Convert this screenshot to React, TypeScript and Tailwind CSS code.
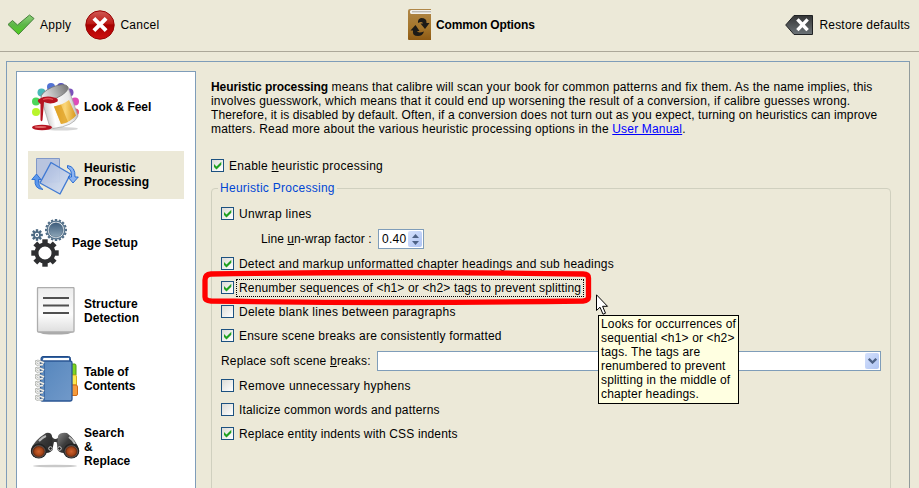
import type { ReactNode } from "react";

function ApplyIcon() {
  return (
    <svg width="28" height="22" viewBox="0 0 28 22" className="shrink-0">
      <defs>
        <linearGradient id="apply" x1="0" y1="0" x2="0" y2="1">
          <stop offset="0" stopColor="#8fd07c" />
          <stop offset="0.5" stopColor="#5db648" />
          <stop offset="1" stopColor="#4fd01c" />
        </linearGradient>
      </defs>
      <path d="M1 10.5 5.500 6.500 10.5 11 22.500 1 27 4.500 11.500 20.500Z" fill="url(#apply)" stroke="#46803a" strokeWidth="1" strokeLinejoin="round" />
    </svg>
  );
}

function CancelIcon() {
  return (
    <svg width="30" height="30" viewBox="0 0 30 30" className="shrink-0">
      <defs>
        <linearGradient id="cancel" x1="0" y1="0" x2="0" y2="1">
          <stop offset="0" stopColor="#cf5a55" />
          <stop offset="0.45" stopColor="#bd1a16" />
          <stop offset="0.5" stopColor="#a60000" />
          <stop offset="1" stopColor="#d01010" />
        </linearGradient>
      </defs>
      <circle cx="15" cy="15" r="14.2" fill="url(#cancel)" stroke="#980505" strokeWidth="1" />
      <path d="M10.300 9.800 19.700 19.200M19.700 9.800 10.300 19.200" stroke="#fff" strokeWidth="4" strokeLinecap="square" />
    </svg>
  );
}

function BookIcon() {
  return (
    <svg width="24" height="32" viewBox="0 0 24 32" className="shrink-0">
      <defs>
        <linearGradient id="cover" x1="0" y1="0" x2="0" y2="1">
          <stop offset="0" stopColor="#b08748" />
          <stop offset="0.6" stopColor="#a4752b" />
          <stop offset="1" stopColor="#8e5a14" />
        </linearGradient>
      </defs>
      <path d="M0 2Q0 0 2 0H23V31H1Q0 31 0 30Z" fill="url(#cover)" />
      <path d="M23 1H3Q1.500 1.500 2 3.500T4 5H23Z" fill="#f3f1ec" />
      <path d="M4 2.800H23" stroke="#a5a29b" strokeWidth="1" />
      <path d="M13 9Q19 9 18.500 14H21.500L17 20 12.500 14.500H15Q14 12 10 14Q9.500 10 13 9Z" fill="#1c1a17" />
      <path d="M10 27Q4 27 5 21.500H2.500L7.500 16 11.500 22H9Q10 24.500 16 22.500Q14.500 27 10 27Z" fill="#1c1a17" />
    </svg>
  );
}

function RestoreIcon() {
  return (
    <svg width="28" height="20" viewBox="0 0 28 20" className="shrink-0">
      <defs>
        <linearGradient id="restore" x1="0" y1="0" x2="0" y2="1">
          <stop offset="0" stopColor="#343536" />
          <stop offset="1" stopColor="#6c7377" />
        </linearGradient>
      </defs>
      <path d="M.7 10 9 .5H27.500V19.500H9Z" fill="url(#restore)" stroke="#202224" />
      <path d="M13.500 5.500 21.500 14M21.500 5.500 13.500 14" stroke="#fff" strokeWidth="3.300" strokeLinecap="square" />
    </svg>
  );
}

function PaintIcon() {
  return (
    <svg width="50" height="48" viewBox="0 0 50 48" className="shrink-0">
      <defs>
        <linearGradient id="can" x1="0" y1="0.2" x2="1" y2="0">
          <stop offset="0" stopColor="#c4c4c4" />
          <stop offset="0.25" stopColor="#ffffff" />
          <stop offset="0.7" stopColor="#e9e9e9" />
          <stop offset="1" stopColor="#999999" />
        </linearGradient>
        <linearGradient id="label" x1="0" x2="1">
          <stop offset="0" stopColor="#e2a62b" />
          <stop offset="0.5" stopColor="#fbd77a" />
          <stop offset="1" stopColor="#d9981a" />
        </linearGradient>
        <linearGradient id="rim" x1="0" x2="1">
          <stop offset="0" stopColor="#f2f2f2" />
          <stop offset="1" stopColor="#777" />
        </linearGradient>
      </defs>
      <circle cx="5" cy="29" r="4" fill="#b8f52c" />
      <circle cx="5" cy="18.500" r="4" fill="#4bd75a" />
      <circle cx="10.500" cy="9.500" r="4" fill="#49b8b8" />
      <circle cx="20" cy="4" r="4" fill="#5272d4" />
      <circle cx="30" cy="4" r="4" fill="#5550bd" />
      <circle cx="38.500" cy="9.500" r="4" fill="#7b51bb" />
      <circle cx="44" cy="18.500" r="4" fill="#df4cb9" />
      <circle cx="44.500" cy="29" r="3.500" fill="#e65b77" />
      <ellipse cx="30" cy="45.800" rx="17" ry="1.800" fill="#bbb" opacity=".6" />
      <path d="M10 15 37 4 47 33Q43 43 22 45.500Q19 44 18 41Z" fill="url(#can)" stroke="#a0a0a0" strokeWidth=".7" />
      <path d="M23 23.500Q32 21.500 38 17L45 32.500Q40 39 30 41Z" fill="url(#label)" />
      <path d="M23 23.500Q27 23 30 21.700L37 39Q34 40.500 30 41Z" fill="#dd9d1f" opacity=".7" />
      <ellipse cx="23.500" cy="9.500" rx="14.500" ry="5.800" transform="rotate(-23 23.500 9.500)" fill="url(#rim)" stroke="#777" strokeWidth=".8" />
      <path d="M8 16Q15 12 23 14.500Q28 15 26.500 18.500Q20 22 13 19L11.500 37Q10.500 39.500 9.500 37L9.500 21Q5 18 8 16Z" fill="#b51320" />
      <path d="M12 16.500Q17 14.500 22 16.500" fill="none" stroke="#e34b52" strokeWidth="1.300" />
      <ellipse cx="11" cy="44.500" rx="10" ry="2.700" fill="#b51320" />
      <ellipse cx="9.500" cy="44" rx="6" ry="1" fill="#e16a6a" />
    </svg>
  );
}

function RotateIcon() {
  return (
    <svg width="48" height="44" viewBox="0 0 48 44" className="shrink-0">
      <defs>
        <linearGradient id="sheet" x1="0" y1="0" x2="1" y2="1">
          <stop offset="0" stopColor="#a3b5dc" />
          <stop offset="1" stopColor="#dbe4f3" />
        </linearGradient>
      </defs>
      <path d="M5.500 5.500H28.500V29H5.500Z" fill="#b8c4df" stroke="#8098c8" />
      <path d="M20 9.500 39.500 21 29 41 9 30Z" fill="url(#sheet)" stroke="#3a76d3" strokeWidth="1.400" strokeLinejoin="round" opacity=".95" />
      <path d="M12 36.500Q3 36 4 26.500H.8L5.500 21 10 26.500H7.500Q7 33 12 36.500Z" fill="#5b97ec" stroke="#1b63cf" strokeWidth=".8" />
      <path d="M36.500 12.500Q44.500 13.500 44 24H47.300L42 30 37 24H40.500Q41 16.500 36.500 15Z" fill="#8db4f1" stroke="#1b63cf" strokeWidth=".9" />
    </svg>
  );
}

const TEETH_8 = [0, 45, 90, 135, 180, 225, 270, 315];
const TEETH_16 = [0, 22.5, 45, 67.5, 90, 112.5, 135, 157.5, 180, 202.5, 225, 247.5, 270, 292.5, 315, 337.5];

function GearsIcon() {
  return (
    <svg width="36" height="48" viewBox="0 0 36 48" className="shrink-0">
      <defs>
        <linearGradient id="steel" x1="0" y1="0" x2="0" y2="1">
          <stop offset="0" stopColor="#3e5d7c" />
          <stop offset="1" stopColor="#8da6b8" />
        </linearGradient>
      </defs>
      <g fill="#536f88">
        {TEETH_16.map((a) => (
          <rect key={a} x="23.800" y="0" width="2.400" height="3" transform={`rotate(${a} 25 11)`} />
        ))}
      </g>
      <circle cx="25" cy="11" r="8.800" fill="#fff" stroke="#58758e" strokeWidth="1.200" />
      <circle cx="25" cy="11" r="7.200" fill="url(#steel)" stroke="#3d5b76" strokeWidth=".6" />
      <g fill="#4b6881">
        {TEETH_8.map((a) => (
          <rect key={a} x="4.800" y="10.200" width="2.400" height="3" transform={`rotate(${a} 6 16)`} />
        ))}
      </g>
      <circle cx="6" cy="16" r="3" fill="none" stroke="#4b6881" strokeWidth="1.700" />
      <circle cx="6" cy="16" r="1" fill="#4b6881" />
      <g fill="#2e2f31">
        {TEETH_8.map((a) => (
          <rect key={a} x="11.300" y="20.300" width="5.400" height="6" transform={`rotate(${a} 14 34)`} />
        ))}
      </g>
      <circle cx="14" cy="34" r="8.500" fill="none" stroke="#2e2f31" strokeWidth="4" />
    </svg>
  );
}

function PageIcon() {
  return (
    <svg width="40" height="48" viewBox="0 0 40 48" className="shrink-0">
      <defs>
        <linearGradient id="page" x1="0" y1="0" x2="0" y2="1">
          <stop offset="0" stopColor="#ededed" />
          <stop offset="0.6" stopColor="#fcfcfc" />
          <stop offset="1" stopColor="#dedede" />
        </linearGradient>
      </defs>
      <path d="M2 45H37L32 47Q19 48 7 47Z" fill="#aaa" />
      <rect x="1.500" y=".500" width="36.500" height="44.500" rx="1" fill="url(#page)" stroke="#adadad" strokeWidth="1.300" />
      <path d="M7 11H33M7 18.500H33M7 26H33" stroke="#505050" strokeWidth="1.800" />
    </svg>
  );
}

function NotebookIcon() {
  return (
    <svg width="44" height="48" viewBox="0 0 44 48" className="shrink-0">
      <defs>
        <linearGradient id="notebook" x1="0" y1="0" x2="1" y2="1">
          <stop offset="0" stopColor="#5586bd" />
          <stop offset="1" stopColor="#7199c9" />
        </linearGradient>
      </defs>
      <path d="M36 9H40Q41 9 41 11V20H36Z" fill="#7ed321" stroke="#4f9c10" />
      <path d="M36 20H40.500Q41.500 20 41.500 22V30H36Z" fill="#fce94f" stroke="#d8ab16" />
      <path d="M36 30H41Q42.500 30 42.500 32V39Q42.500 40.500 41 40.500H36Z" fill="#f59b3c" stroke="#d16814" />
      <rect x="6" y="1.500" width="29.500" height="43" rx="2" fill="#3465a4" stroke="#204a87" />
      <path d="M8.500 3H34V6H7.500Z" fill="#fff" />
      <rect x="5.500" y="6" width="31.500" height="40" rx="2" fill="url(#notebook)" stroke="#2a5694" strokeWidth="1.300" />
      <path d="M9.500 8V45" stroke="#3d6ba5" strokeWidth="1" />
      {[9, 16, 23, 30, 37, 44].map((y) => (
        <g key={y} fill="none">
          <path d={`M9 ${y - 1}Q1 ${y - 5} 1 ${y - 1.5}T8 ${y + 0.5}`} stroke="#8b8f8b" strokeWidth="2.300" />
          <path d={`M9 ${y - 1}Q1 ${y - 5} 1 ${y - 1.5}T8 ${y + 0.5}`} stroke="#efefec" strokeWidth="1.400" />
        </g>
      ))}
    </svg>
  );
}

function BinocularsIcon() {
  return (
    <svg width="50" height="38" viewBox="0 0 50 38" className="shrink-0">
      <defs>
        <linearGradient id="barrel" x1="0" y1="0" x2="1" y2="1">
          <stop offset="0" stopColor="#8b8b8b" />
          <stop offset="0.4" stopColor="#3b3b3b" />
          <stop offset="1" stopColor="#1b1b1b" />
        </linearGradient>
        <radialGradient id="lens">
          <stop offset="0" stopColor="#d0622f" />
          <stop offset="0.65" stopColor="#a34518" />
          <stop offset="1" stopColor="#4a1a0a" />
        </radialGradient>
      </defs>
      <ellipse cx="25" cy="35" rx="22" ry="1.300" fill="#c9c9c9" />
      <path d="M15 5Q20 2 23 7Q25 9 28 7Q31 2 36 5L33 20H29L26.500 11H24L22 20H17Z" fill="#3a3a3a" />
      <path d="M1 19Q3 10 16 2Q21 1 22 5L23 18Q21 22 16 22L8 27Q1 26 1 19Z" fill="url(#barrel)" />
      <path d="M49 19Q47 10 37 2Q30 1 28 5L27 18Q29 22 34 22L42 27Q49 26 49 19Z" fill="url(#barrel)" />
      <path d="M9 10Q13 6 16 5M39 6Q43 9 45 13" stroke="#bbb" strokeWidth="2" fill="none" />
      <ellipse cx="8.800" cy="20" rx="8" ry="7.500" fill="#232323" />
      <ellipse cx="41.300" cy="20" rx="8" ry="7.500" fill="#232323" />
      <ellipse cx="8.800" cy="20.500" rx="6.300" ry="5.800" fill="url(#lens)" stroke="#8c8c8c" strokeWidth=".5" />
      <ellipse cx="41.300" cy="20.500" rx="6.300" ry="5.800" fill="url(#lens)" stroke="#8c8c8c" strokeWidth=".5" />
      <circle cx="20.500" cy="17.500" r="1.800" fill="#222" stroke="#ddd" strokeWidth=".9" />
      <circle cx="29.500" cy="17.500" r="1.800" fill="#222" stroke="#ddd" strokeWidth=".9" />
    </svg>
  );
}

function NavItem({ icon, selected, children }: { icon: ReactNode; selected?: boolean; children: ReactNode }) {
  return (
    <div className={`flex h-12 w-[156px] shrink-0 items-center font-bold tracking-[0.04px] ${selected ? "bg-[#ece9d8]" : ""}`}>
      {icon}
      <div className="whitespace-nowrap">{children}</div>
    </div>
  );
}

function Check({ checked }: { checked?: boolean }) {
  return (
    <span className="mb-px flex h-[13px] w-[13px] shrink-0 items-center justify-center border border-[#1c5180] bg-linear-to-br from-[#dcdcd7] to-white">
      {checked && (
        <svg width="9" height="9" viewBox="0 0 9 9">
          <path d="M1 3V6L3.500 8.500 8.300 3.700V.8L3.500 5.500Z" fill="#21a121" />
        </svg>
      )}
    </span>
  );
}

function CheckRow({ checked, children }: { checked?: boolean; children: ReactNode }) {
  return (
    <div className="flex h-6 shrink-0 items-center whitespace-nowrap">
      <Check checked={checked} />
      <span className="ml-[5px]">{children}</span>
    </div>
  );
}

export default function App() {
  return (
    <div className="relative flex h-[488px] w-[919px] flex-col overflow-hidden bg-[#ece9d8] font-['Liberation_Sans',Arial,sans-serif] text-[12px] leading-[14px] tracking-[0.27px] text-black">
      <header className="flex h-[52px] shrink-0 items-center justify-between whitespace-nowrap border-b border-[#aca899] pr-[9px] pl-[7px] pb-px">
        <div className="flex w-[401px] items-center">
          <ApplyIcon />
          <span className="ml-[5px]">Apply</span>
          <span className="ml-[14px] flex"><CancelIcon /></span>
          <span className="ml-[5px]">Cancel</span>
        </div>
        <div className="flex flex-1 items-center">
          <BookIcon />
          <span className="ml-1 font-bold tracking-[-0.14px]">Common Options</span>
        </div>
        <div className="flex items-center">
          <RestoreIcon />
          <span className="ml-[6px] tracking-[0.2px]">Restore defaults</span>
        </div>
      </header>

      <main className="mt-[9px] ml-[6px] flex h-[440px] w-[904px] shrink-0 border border-[#7f9db9] border-r-[#919b9c] pt-[9px] pl-[9px]">
        <nav className="flex h-[440px] w-[180px] shrink-0 flex-col gap-5 border border-[#7f9db9] bg-white pt-[11px] pl-[11px]">
          <NavItem icon={<span className="flex w-14 pl-[3px]"><PaintIcon /></span>}><span className="tracking-[-0.08px]">Look &amp; Feel</span></NavItem>
          <NavItem selected icon={<span className="flex w-14 pl-[3px]"><RotateIcon /></span>}>Heuristic<br />Processing</NavItem>
          <NavItem icon={<span className="flex w-11 pl-[3px]"><GearsIcon /></span>}>Page Setup</NavItem>
          <NavItem icon={<span className="flex w-14 pl-[8px]"><PageIcon /></span>}>Structure<br />Detection</NavItem>
          <NavItem icon={<span className="flex w-14 pl-[7px]"><NotebookIcon /></span>}><span className="tracking-[-0.08px]">Table of<br />Contents</span></NavItem>
          <NavItem icon={<span className="flex w-14 pt-[5px] pl-[2px]"><BinocularsIcon /></span>}>Search<br />&amp;<br />Replace</NavItem>
        </nav>

        <section className="ml-[15px] flex w-[680px] flex-col pt-[9px]">
          <p className="whitespace-nowrap tracking-[0.17px]">
            <b className="tracking-[-0.08px]">Heuristic processing</b> means that calibre will scan your book for common patterns and fix them. As the name implies, this<br />
            involves guesswork, which means that it could end up worsening the result of a conversion, if calibre guesses wrong.<br />
            <span className="tracking-[0.1px]">Therefore, it is disabled by default. Often, if a conversion does not turn out as you expect, turning on heuristics can improve</span><br />
            matters. Read more about the various heuristic processing options in the <a className="text-[#0000ff] underline">User Manual</a>.
          </p>
          <div className="mt-[18px]">
            <CheckRow checked>Enable <u>h</u>euristic processing</CheckRow>
          </div>
          <fieldset className="mt-[3px] flex h-[340px] w-[680px] shrink-0 flex-col rounded-[4px] border border-[#d0d0bf] pl-[9px]">
            <legend className="-ml-[3px] px-[2px] text-[#0046d5]">Heuristic Processing</legend>
            <div className="mt-[7px] flex flex-col tracking-[0.2px]">
              <CheckRow checked><span className="tracking-[0.27px]">Unwrap lines</span></CheckRow>
              <div className="flex h-[26px] shrink-0 items-center pl-[40px] whitespace-nowrap tracking-[0.27px]">
                <span className="w-[117px] tracking-[0.06px]">Line <u>u</u>n-wrap factor :</span>
                <div className="flex h-5 w-[46px] items-center border border-[#7f9db9] bg-white pr-px pl-[3px]">
                  <span className="flex-1">0.40</span>
                  <span className="flex h-4 w-[14px] flex-col items-center justify-center gap-[3px] rounded-[2px] bg-linear-to-br from-[#d5e1fc] to-[#afc4f3]">
                    <svg width="7" height="4" viewBox="0 0 7 4"><path d="M0 4 3.500 0 7 4Z" fill="#4d6185" /></svg>
                    <svg width="7" height="4" viewBox="0 0 7 4"><path d="M0 0 3.500 4 7 0Z" fill="#4d6185" /></svg>
                  </span>
                </div>
              </div>
              <CheckRow checked>Detect and markup unformatted chapter headings and sub headings</CheckRow>
              <div className="relative flex h-6 shrink-0 items-center whitespace-nowrap tracking-[0.155px]">
                <Check checked />
                <span className="ml-[2px] flex h-[18px] w-[348px] items-center border border-dotted border-black pl-[2px]">Renumber sequences of &lt;h1&gt; or &lt;h2&gt; tags to prevent splitting</span>
                <svg width="392" height="38" viewBox="0 0 392 38" className="pointer-events-none absolute -top-[7px] -left-[20px]">
                  <path d="M10 5Q195 2 382 5Q387.500 5 387.500 9V28Q387.500 31.500 382 32Q195 35 10 32Q4 31.500 4 28V11Q4 5.500 10 5Z" fill="none" stroke="#ff0000" strokeWidth="5.300" />
                </svg>
              </div>
              <CheckRow><span className="tracking-[0.25px]">Delete blank lines between paragraphs</span></CheckRow>
              <CheckRow checked>Ensure scene breaks are consistently formatted</CheckRow>
              <div className="flex h-[26px] shrink-0 items-center whitespace-nowrap">
                <span className="w-[156px] tracking-[0.19px]">Replace soft scene <u>b</u>reaks:</span>
                <div className="flex h-5 w-[504px] items-center justify-end border border-[#7f9db9] bg-white pr-px">
                  <span className="flex h-4 w-[14px] items-center justify-center rounded-[2px] bg-linear-to-br from-[#d5e1fc] to-[#afc4f3]">
                    <svg width="9" height="6" viewBox="0 0 9 6"><path d="M.8.800 4.500 4.500 8.200.800" fill="none" stroke="#4d6185" strokeWidth="2.300" /></svg>
                  </span>
                </div>
              </div>
              <CheckRow><span className="tracking-[0.27px]">Remove unnecessary hyphens</span></CheckRow>
              <CheckRow><span className="tracking-[0.17px]">Italicize common words and patterns</span></CheckRow>
              <CheckRow checked><span className="tracking-[0.15px]">Replace entity indents with CSS indents</span></CheckRow>
            </div>
          </fieldset>
        </section>
      </main>

      <div className="absolute top-[315px] left-[598px] h-[89px] w-[141px] border border-black bg-[#ffffe1] pt-px pl-[2px] tracking-[0.15px] whitespace-nowrap">
        Looks for occurrences of<br />sequential &lt;h1&gt; or &lt;h2&gt;<br />tags. The tags are<br />renumbered to prevent<br />splitting in the middle of<br />chapter headings.
      </div>
      <svg width="13" height="22" viewBox="0 0 13 22" className="absolute top-[294px] left-[596px]">
        <path d="M.5.8V16.500L4 13.200 7 20.200 9.500 19.200 6.600 12.300H11.500Z" fill="#fff" stroke="#000" />
      </svg>
    </div>
  );
}
